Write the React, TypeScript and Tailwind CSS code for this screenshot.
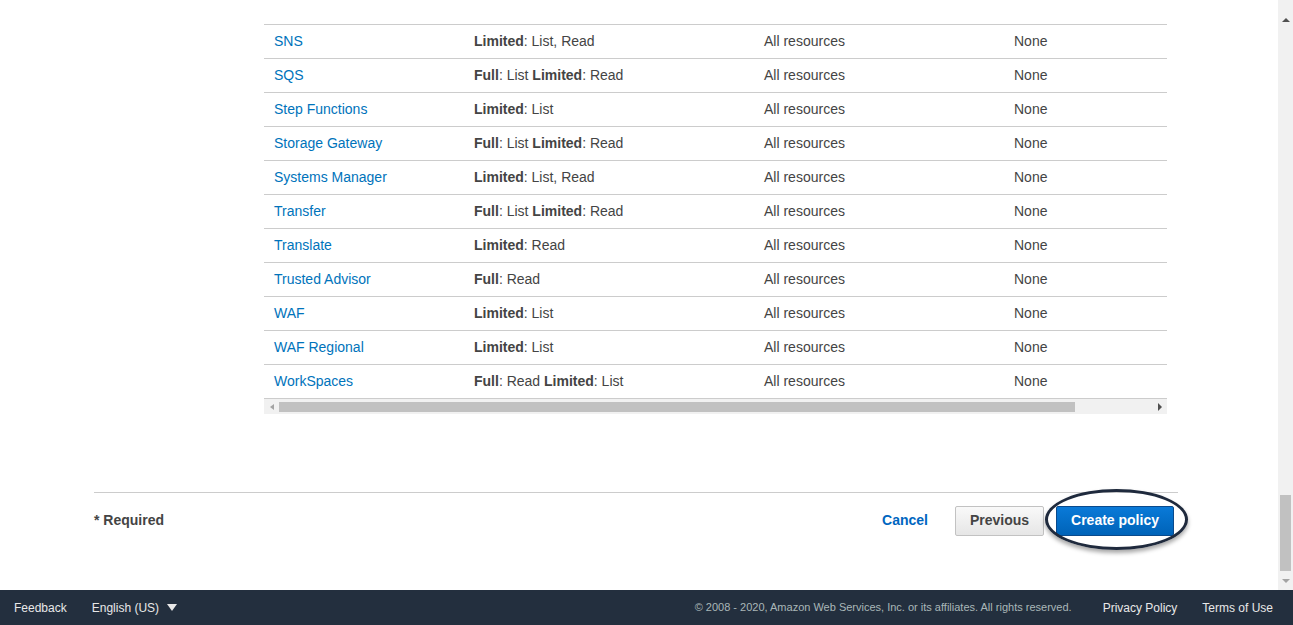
import React from 'react';

type Row = { service: string; access: [string, string][]; resource: string; condition: string };

const rows: Row[] = [
  { service: 'SNS', access: [['Limited', 'List, Read']], resource: 'All resources', condition: 'None' },
  { service: 'SQS', access: [['Full', 'List'], ['Limited', 'Read']], resource: 'All resources', condition: 'None' },
  { service: 'Step Functions', access: [['Limited', 'List']], resource: 'All resources', condition: 'None' },
  { service: 'Storage Gateway', access: [['Full', 'List'], ['Limited', 'Read']], resource: 'All resources', condition: 'None' },
  { service: 'Systems Manager', access: [['Limited', 'List, Read']], resource: 'All resources', condition: 'None' },
  { service: 'Transfer', access: [['Full', 'List'], ['Limited', 'Read']], resource: 'All resources', condition: 'None' },
  { service: 'Translate', access: [['Limited', 'Read']], resource: 'All resources', condition: 'None' },
  { service: 'Trusted Advisor', access: [['Full', 'Read']], resource: 'All resources', condition: 'None' },
  { service: 'WAF', access: [['Limited', 'List']], resource: 'All resources', condition: 'None' },
  { service: 'WAF Regional', access: [['Limited', 'List']], resource: 'All resources', condition: 'None' },
  { service: 'WorkSpaces', access: [['Full', 'Read'], ['Limited', 'List']], resource: 'All resources', condition: 'None' },
];

function PolicyRow({ row }: { row: Row }) {
  return (
    <div className="flex h-[34px] items-center border-b border-[#cccccc] text-[14px] text-[#444444]">
      <div className="w-[210px] pl-[10px]">
        <a className="text-[#0073bb] cursor-pointer">{row.service}</a>
      </div>
      <div className="w-[290px]">
        {row.access.map(([level, actions], i) => (
          <span key={i}>
            {i > 0 && ' '}
            <b className="font-bold">{level}</b>: {actions}
          </span>
        ))}
      </div>
      <div className="w-[250px]">{row.resource}</div>
      <div className="flex-1">{row.condition}</div>
    </div>
  );
}

export default function App() {
  return (
    <div className="flex h-[625px] w-full flex-col overflow-hidden bg-white font-['Liberation_Sans',Arial,sans-serif]">
      <div className="flex min-h-0 flex-1">
        <div className="flex-1">
          {/* policy summary table */}
          <div className="ml-[264px] mt-[24px] w-[903px]">
            <div className="border-t border-[#cccccc]">
              {rows.map((r) => (
                <PolicyRow key={r.service} row={r} />
              ))}
            </div>
            <div className="flex h-[15px] items-center bg-[#f1f1f1]">
              <div className="flex w-[15px] justify-center">
                <span className="h-0 w-0 border-y-[3px] border-r-[4px] border-y-transparent border-r-[#a3a3a3]" />
              </div>
              <div className="h-[10px] w-[796px] bg-[#c1c1c1]" />
              <div className="flex-1" />
              <div className="flex w-[15px] justify-center">
                <span className="h-0 w-0 border-y-[4px] border-l-[4px] border-y-transparent border-l-[#505050]" />
              </div>
            </div>
          </div>

          {/* wizard footer */}
          <div className="ml-[94px] mt-[78px] w-[1084px] border-t border-[#cccccc]">
            <div className="flex h-[55px] items-center">
              <span className="text-[14px] font-bold text-[#444444]">* Required</span>
              <div className="ml-auto flex items-center">
                <a className="mr-[27px] cursor-pointer text-[14px] font-bold text-[#0066c0]">Cancel</a>
                <button className="h-[30px] w-[89px] rounded-[2px] border border-[#c2c2c2] bg-gradient-to-b from-[#f9f9f9] to-[#e6e6e6] text-[14px] font-bold text-[#444444]">
                  Previous
                </button>
                <div className="relative ml-[12px] mr-[4px]">
                  <button className="h-[30px] w-[118px] rounded-[2px] border border-[#0a4a8c] bg-gradient-to-b from-[#0a7ad8] to-[#0063b8] text-[14px] font-bold text-white">
                    Create policy
                  </button>
                  <div className="pointer-events-none absolute left-[-11px] top-[-17px] h-[61px] w-[143px] rounded-[50%] border-[3px] border-[#1f2a3d] shadow-[0_3px_4px_rgba(0,0,0,0.35)]" />
                </div>
              </div>
            </div>
          </div>
        </div>

        {/* page scrollbar */}
        <div className="flex w-[15px] flex-col items-center bg-[#f1f1f1]">
          <div className="flex h-[15px] w-full items-center justify-center mt-[12px]">
            <span className="h-0 w-0 border-x-[4px] border-b-[4px] border-x-transparent border-b-[#505050]" />
          </div>
          <div className="flex-1" />
          <div className="h-[76px] w-[11px] bg-[#c1c1c1]" />
          <div className="flex h-[19px] w-full items-center justify-center">
            <span className="h-0 w-0 border-x-[4px] border-t-[4px] border-x-transparent border-t-[#a3a3a3]" />
          </div>
        </div>
      </div>

      {/* console footer */}
      <div className="flex h-[35px] items-center bg-[#232f3e] text-[12px] text-[#e8e8e8]">
        <span className="ml-[14px]">Feedback</span>
        <span className="ml-[25px] flex items-center">
          English (US)
          <span className="ml-[8px] h-0 w-0 border-x-[5px] border-t-[7px] border-x-transparent border-t-[#e8e8e8]" />
        </span>
        <span className="ml-auto text-[11px] text-[#aab7b8]">
          © 2008 - 2020, Amazon Web Services, Inc. or its affiliates. All rights reserved.
        </span>
        <span className="ml-[31px]">Privacy Policy</span>
        <span className="ml-[25px] mr-[20px]">Terms of Use</span>
      </div>
    </div>
  );
}
